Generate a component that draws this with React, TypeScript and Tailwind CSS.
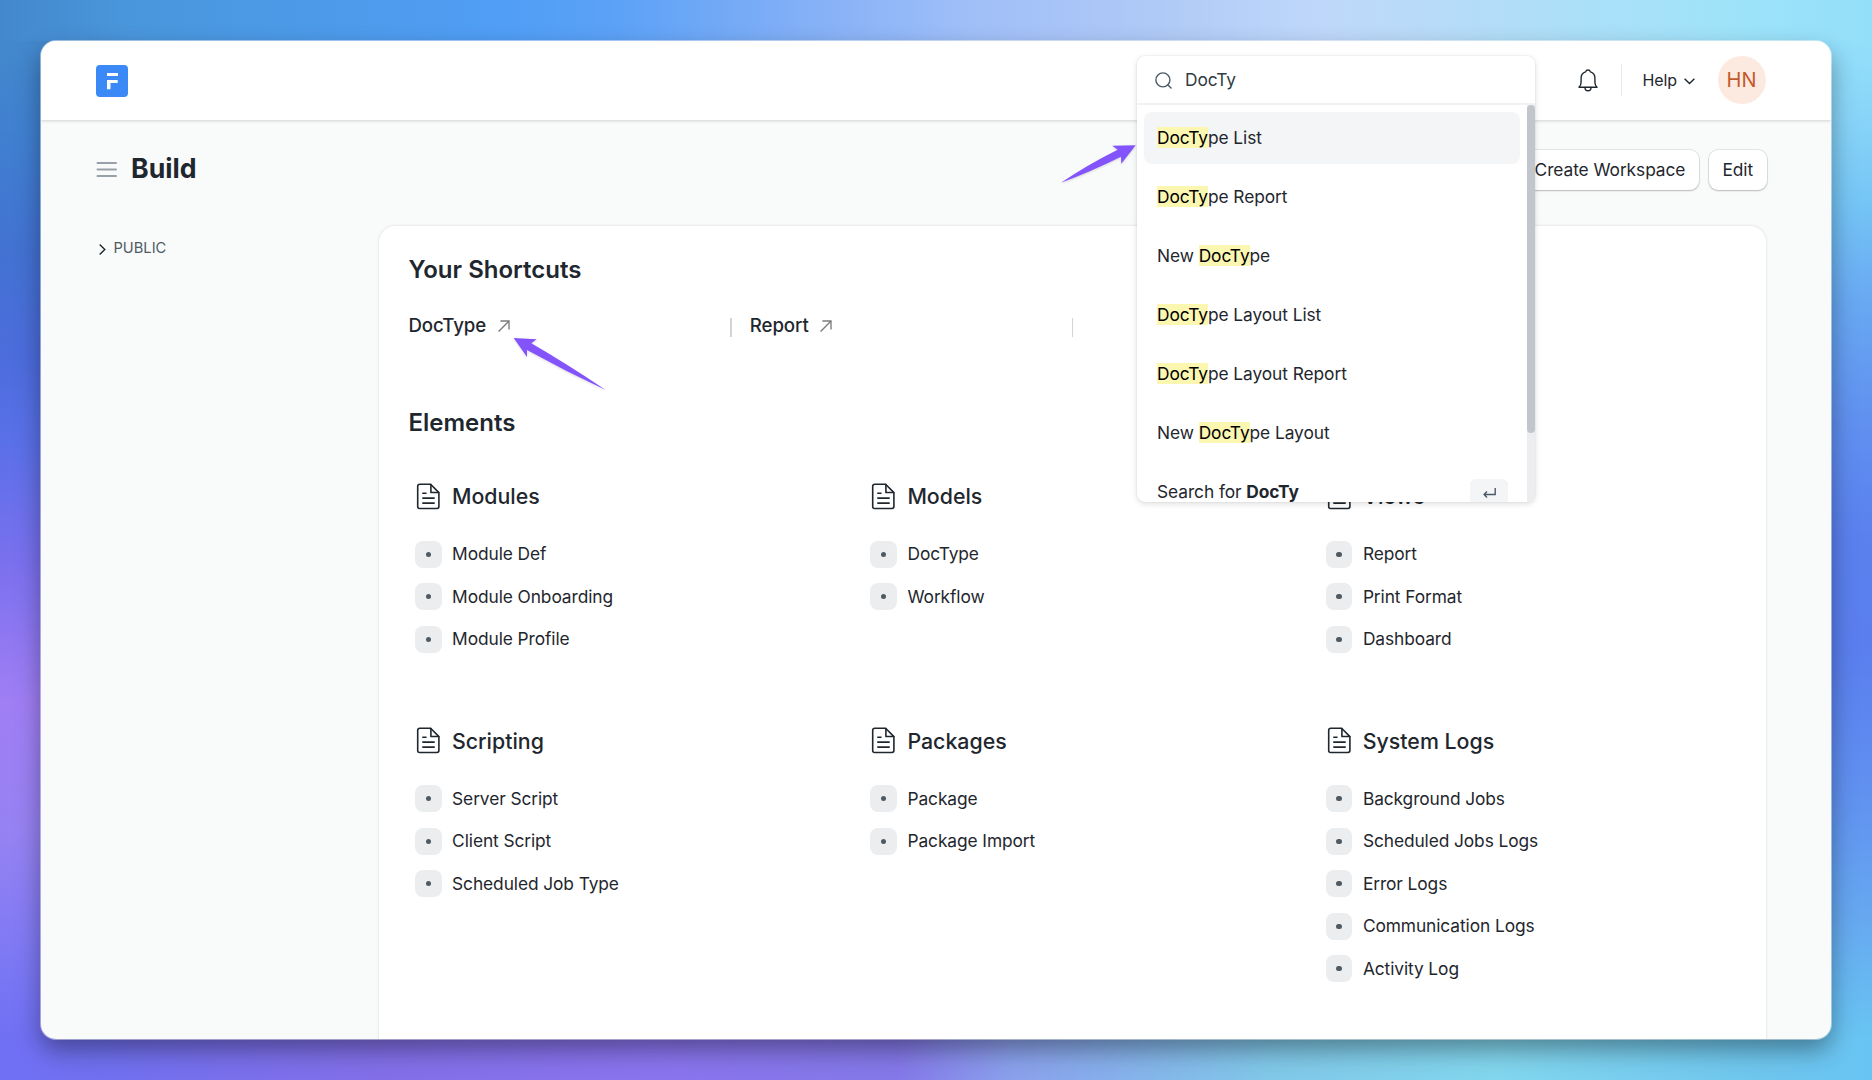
import React from "react";

function DocIcon() {
  return (
    <svg className="h-[27px] w-[27px] shrink-0" viewBox="0 0 27 27" fill="none" stroke="#1f272e" strokeWidth="1.6" strokeLinejoin="round" strokeLinecap="round">
      <path d="M4.6 1.3H15.6L23.9 9.6V23.6A1.9 1.9 0 0 1 22 25.5H4.6A1.9 1.9 0 0 1 2.7 23.6V3.2A1.9 1.9 0 0 1 4.6 1.3Z" />
      <path d="M15.9 1.6V9.5H23.7M7.8 10.3H11M7.8 15.1H19.2M7.8 20.1H19.2" />
    </svg>
  );
}

function Group({ title, items }: { title: string; items: string[] }) {
  return (
    <section>
      <div className="flex h-8 items-center gap-[10px]">
        <DocIcon />
        <h3 className="text-[21.33px] font-medium leading-8">{title}</h3>
      </div>
      <ul className="mt-[21px]">
        {items.map((item) => (
          <li key={item} className="flex h-[42.5px] items-center gap-[10.5px]">
            <span className="flex h-[26.6px] w-[26.6px] shrink-0 items-center justify-center rounded-[8px] bg-[#ebedef]">
              <span className="h-[5.4px] w-[5.4px] rounded-full bg-[#505a62]" />
            </span>
            <span className="text-[17.33px] leading-6 tracking-[-0.005em]">{item}</span>
          </li>
        ))}
      </ul>
    </section>
  );
}

function Shortcut({ label }: { label: string }) {
  return (
    <div className="flex w-[341.3px] items-center justify-between pr-[18px]">
      <div className="flex items-center gap-[11.5px]">
        <span className="text-[18.67px] font-medium leading-6 tracking-[-0.005em]">{label}</span>
        <svg className="h-[12px] w-[12px]" viewBox="0 0 12 12" fill="none" stroke="#7c7c7c" strokeWidth="1.35">
          <path d="M0.6 11.4L11 1M2.4 1H11V9.6" />
        </svg>
      </div>
      <span className="mt-[3px] h-[19px] w-[1.5px] bg-[#d1d5d9]" />
    </div>
  );
}

function Result({ before = "", after, active = false }: { before?: string; after: string; active?: boolean }) {
  return (
    <div className={"mx-[7px] mb-[7px] flex h-[52px] w-[376px] shrink-0 items-center rounded-[8px] px-[13px] " + (active ? "bg-[#f4f5f6]" : "")}>
      <span className="whitespace-pre text-[17.33px] leading-6 tracking-[-0.004em]">
        {before}
        <mark className="bg-[#fcf7b0] text-black">DocTy</mark>
        {after}
      </span>
    </div>
  );
}

function SearchPanel() {
  return (
    <div className="absolute left-[1096px] top-[15px] z-10 h-[446px] w-[398px] overflow-hidden rounded-[8px] bg-white shadow-[0_0_2px_rgba(0,0,0,0.12),0_2px_6px_rgba(0,0,0,0.12)]">
      <div className="flex h-[49px] items-center border-b-2 border-[#f1f2f3] pl-[18px] pt-px">
        <svg className="h-[17px] w-[17px]" viewBox="0 0 17 17" fill="none" stroke="#4c5a67" strokeWidth="1.4" strokeLinecap="round">
          <circle cx="7.9" cy="7.9" r="7" />
          <path d="M13 13L16 16" />
        </svg>
        <span className="ml-[13px] text-[17.33px] leading-6 tracking-[-0.006em] text-[#313b44]">DocTy</span>
      </div>
      <div className="flex h-[397px] justify-between">
        <div className="flex flex-col pt-[7px]">
          <Result after="pe List" active />
          <Result after="pe Report" />
          <Result before="New " after="pe" />
          <Result after="pe Layout List" />
          <Result after="pe Layout Report" />
          <Result before="New " after="pe Layout" />
          <div className="mx-[7px] flex h-[52px] w-[376px] shrink-0 items-center justify-between px-[13px] text-[17.33px] tracking-[-0.004em]">
            <span>
              Search for <b className="font-bold">DocTy</b>
            </span>
            <span className="mt-px flex h-[27px] w-[36px] items-center justify-center rounded-[5px] bg-[#f4f5f6] shadow-[0_1px_1px_rgba(0,0,0,0.4)]">
              <svg className="h-[10px] w-[13px]" viewBox="0 0 13 10" fill="none" stroke="#4c5a67" strokeWidth="1.4">
                <path d="M12.2 0V6.5H1.2M4 3.6L1.1 6.5L4 9.4" />
              </svg>
            </span>
          </div>
        </div>
        <div className="h-full w-[8px] bg-[#ebedef]">
          <div className="h-[328px] rounded-[4px] bg-[#c0c6cb]" />
        </div>
      </div>
    </div>
  );
}

function Navbar() {
  return (
    <header className="flex h-[79px] shrink-0 items-center justify-between bg-white pl-[54.5px] pr-[65.5px] shadow-[0_1px_3px_rgba(0,0,0,0.16)]">
      <svg className="h-8 w-8" viewBox="0 0 32 32">
        <rect width="32" height="32" rx="4" fill="#3b88f7" />
        <path d="M11 8H22V11H11ZM11 15H21.7V18H14.5V24.3H11Z" fill="#fff" />
      </svg>
      <div className="mb-px flex items-center">
        <svg className="h-[23px] w-[20px]" viewBox="0 0 20 23" fill="none" stroke="#1f272e" strokeWidth="1.4" strokeLinejoin="round" strokeLinecap="round">
          <path d="M1 18.2C2.3 17 3.1 15.6 3.1 13.2V8.9C3.1 5.8 4.9 3.7 7.6 2.9C8 1.6 8.8 1 10 1S12 1.6 12.4 2.9C15.1 3.7 16.9 5.8 16.9 8.9V13.2C16.9 15.6 17.7 17 19 18.2Z" />
          <path d="M7 18.4C7 20.6 8.3 21.8 10 21.8S13 20.6 13 18.4" />
        </svg>
        <span className="ml-[23px] h-8 w-[1.5px] bg-[#e6e9eb]" />
        <span className="ml-[20px] text-[16px] leading-6 tracking-[-0.005em]">Help</span>
        <svg className="ml-[7px] mt-[2px] h-[7px] w-[11px]" viewBox="0 0 11 7" fill="none" stroke="#1f272e" strokeWidth="1.4">
          <path d="M0.6 0.7L5.5 5.6L10.4 0.7" />
        </svg>
        <span className="ml-[22.5px] flex h-12 w-12 items-center justify-center rounded-full bg-[#fceae1] text-[20px] text-[#c45a2a]">HN</span>
      </div>
    </header>
  );
}

function PageButton({ label }: { label: string }) {
  return (
    <button className="flex h-[40px] items-center rounded-[9px] bg-white px-[13.5px] shadow-[0_0_0_1px_rgba(0,0,0,0.08),0_1px_2px_rgba(0,0,0,0.2)]">
      {label}
    </button>
  );
}

export default function App() {
  return (
    <div className="h-[1080px] w-[1872px] overflow-hidden p-[41px] font-['Inter',sans-serif] text-[#1f272e] [background:linear-gradient(90deg,#4388cc_0%,#4a96dc_7%,#509ef6_27%,#5ca2f7_33%,#80aef6_42%,#a0bff8_52%,#b0caf7_62%,#bfd8fa_71%,#b3ddf8_80%,#9fe3f9_92%,#93dffa_100%)_0_0/100%_41px_no-repeat,linear-gradient(90deg,#7070f5_0%,#7070f0_5%,#826fe8_20%,#8a74ee_35%,#8478e8_48%,#8aa0ec_54%,#80c8e8_68%,#82d6ee_80%,#6ec6ee_94%,#68c4f2_100%)_0_100%/100%_41px_no-repeat,linear-gradient(180deg,#4388cc_0%,#4388cc_4%,#4080d0_12%,#4272d2_23%,#4c6cdc_33%,#5a70e8_41%,#7a70ee_52%,#a07ef4_65%,#9682f2_77%,#7c78f4_89%,#7070f3_96%,#7070f3_100%)_0_0/60px_100%_no-repeat,linear-gradient(180deg,#93dffa_0%,#93dffa_4%,#88d4f8_11%,#74c4f5_19%,#68a8f2_28%,#6090f0_39%,#5a80ee_50%,#5a7eee_60%,#6090f0_73%,#66a8f0_85%,#68c4f2_96%,#68c4f2_100%)_100%_0/60px_100%_no-repeat]">
      <div className="relative flex h-[998px] w-[1790px] flex-col overflow-hidden rounded-[15px] bg-[#f9fafa] shadow-[0_0_0_1px_rgba(255,255,255,0.45),0_11px_24px_rgba(0,0,0,0.38)]">
        <Navbar />
        <SearchPanel />
        <div className="mb-[7px] flex h-[99px] shrink-0 items-center justify-between pl-[55px] pr-[64.5px]">
          <div className="flex items-center">
            <svg className="h-[17px] w-[21px]" viewBox="0 0 21 17" stroke="#98a1a9" strokeWidth="2" strokeLinecap="round">
              <path d="M1.5 2H20M1.5 8.5H20M1.5 15H20" />
            </svg>
            <h1 className="mb-[4px] ml-[14px] text-[26.67px] font-bold leading-8">Build</h1>
          </div>
          <div className="flex gap-[10px] text-[17.33px] tracking-[-0.004em]">
            <PageButton label="Create Workspace" />
            <PageButton label="Edit" />
          </div>
        </div>
        <div className="flex flex-1">
          <aside className="flex w-[338px] items-start pl-[57.5px] pt-[10px]">
            <svg className="mt-[8px] h-[11px] w-[7px]" viewBox="0 0 7 11" fill="none" stroke="#1f272e" strokeWidth="1.4">
              <path d="M0.7 0.6L5.8 5.5L0.7 10.4" />
            </svg>
            <span className="ml-[8px] text-[14.67px] leading-6 text-[#505a62]">PUBLIC</span>
          </aside>
          <main className="h-[830px] w-[1387px] rounded-t-[16px] bg-white px-[29.5px] pt-[28px] shadow-[0_0_3px_rgba(0,0,0,0.14)]">
            <h2 className="text-[24px] font-semibold leading-8">Your Shortcuts</h2>
            <div className="mt-[28px] flex">
              <Shortcut label="DocType" />
              <Shortcut label="Report" />
            </div>
            <h2 className="mt-[69px] text-[24px] font-semibold leading-8">Elements</h2>
            <div className="ml-[6.5px] mt-[41px] grid grid-cols-[455.4px_455.4px_1fr] gap-y-[64px]">
              <Group title="Modules" items={["Module Def", "Module Onboarding", "Module Profile"]} />
              <Group title="Models" items={["DocType", "Workflow"]} />
              <Group title="Views" items={["Report", "Print Format", "Dashboard"]} />
              <Group title="Scripting" items={["Server Script", "Client Script", "Scheduled Job Type"]} />
              <Group title="Packages" items={["Package", "Package Import"]} />
              <Group title="System Logs" items={["Background Jobs", "Scheduled Jobs Logs", "Error Logs", "Communication Logs", "Activity Log"]} />
            </div>
          </main>
        </div>
        <svg className="absolute left-[1020px] top-[104px] z-20 h-[38px] w-[75px] drop-shadow-[0_1px_1px_rgba(0,0,0,0.15)]" viewBox="0 0 75 38" fill="#8354fb">
          <path d="M74.7 0.3L51.3 0.7L56.7 4.7Q26 20 0 37.7Q29 27 60 11.7L60.3 18.7Z" />
        </svg>
        <svg className="absolute left-[472px] top-[297px] z-20 h-[53px] w-[93px] drop-shadow-[0_1px_1px_rgba(0,0,0,0.15)]" viewBox="0 0 93 53" fill="#8354fb">
          <path d="M0.7 0L23.7 1.3L18.3 5.3Q54 26 92.7 52Q52 33 14 12L14 19Z" />
        </svg>
      </div>
    </div>
  );
}
